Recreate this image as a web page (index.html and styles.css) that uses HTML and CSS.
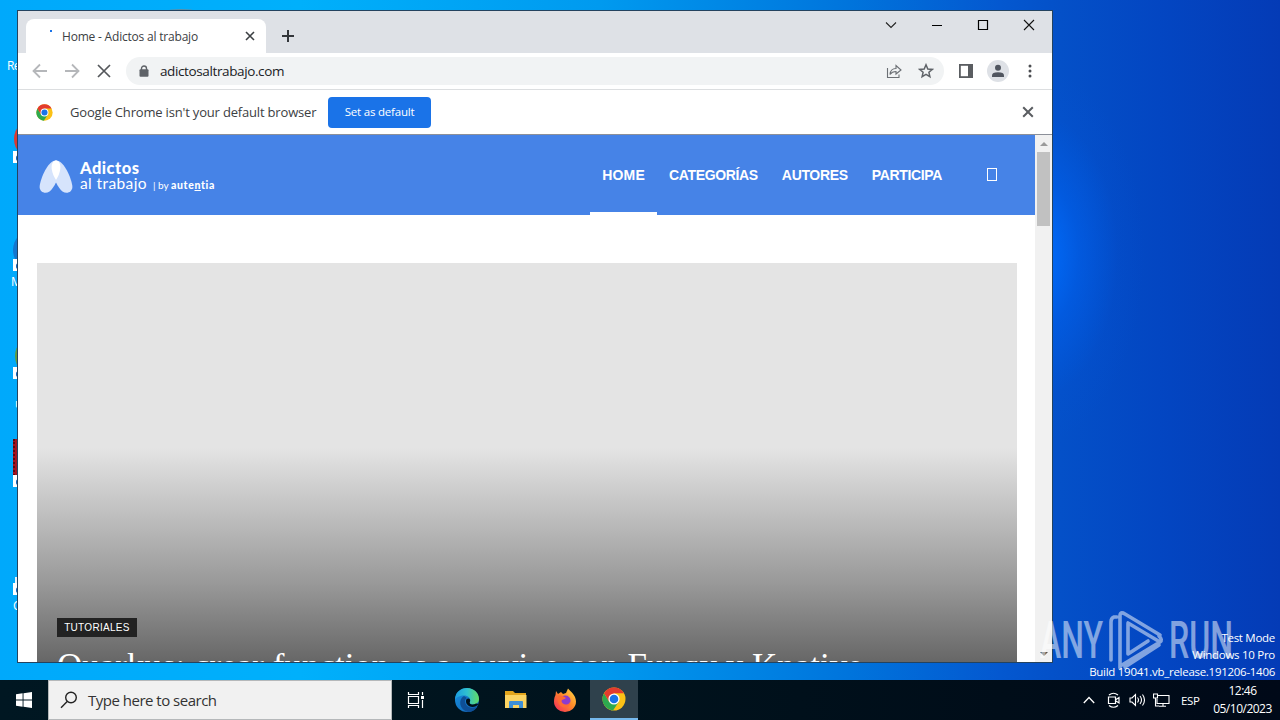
FILE: index.html
```html
<!DOCTYPE html>
<html lang="en">
<head>
    <meta charset="UTF-8">
    <meta name="viewport" content="width=device-width, initial-scale=1.0">
    <title>Home - Adictos al trabajo</title>
    <link rel="stylesheet" href="styles.css">
</head>
<body>

    <!-- Shared symbols -->
    <svg class="defs" width="0" height="0">
        <symbol id="chrome" viewBox="0 0 24 24">
            <circle cx="12" cy="12" r="11.5" fill="#fbc116"/>
            <path d="M2.04 6.25 A11.5 11.5 0 0 0 11 23.5 L16.8 14.8 L12 12 L7.2 14.8Z" fill="#2da94f"/>
            <path d="M2.04 6.25 A11.5 11.5 0 0 1 21.96 6.25 L12 6.25 L7.2 14.8Z" fill="#e33b2e"/>
            <circle cx="12" cy="12" r="5.6" fill="#fff"/>
            <circle cx="12" cy="12" r="4.3" fill="#1a73e8"/>
        </symbol>
        <symbol id="shortcut" viewBox="0 0 12 12">
            <path d="M0 0H12V12H0Z" fill="#fff"/>
            <path d="M3 10V6.500Q3 4 6 4V2L10 5.500L6 8.500V6.500Q4.500 6.500 3 10" fill="#1565c0"/>
        </symbol>
    </svg>

    <div class="desktop">

        <!-- Desktop icons, mostly hidden behind the window -->
        <div class="icon-label label-recycle">Re</div>
        <div class="desk-icon icon-red"></div>
        <svg class="shortcut sc-1"><use href="#shortcut"/></svg>
        <div class="desk-icon icon-edge"></div>
        <svg class="shortcut sc-2"><use href="#shortcut"/></svg>
        <div class="icon-label label-edge">M</div>
        <div class="desk-icon icon-green"></div>
        <svg class="shortcut sc-3"><use href="#shortcut"/></svg>
        <div class="icon-label label-small">u</div>
        <div class="desk-icon icon-zip"></div>
        <svg class="shortcut sc-4"><use href="#shortcut"/></svg>
        <div class="desk-icon icon-white"></div>
        <svg class="shortcut sc-5"><use href="#shortcut"/></svg>
        <div class="icon-label label-c">C</div>
        <div class="desk-icon icon-top"></div>

        <div class="window">
            <div class="tab-strip">
                <div class="tab">
                    <span class="spinner"></span>
                    <span class="tab-title">Home - Adictos al trabajo</span>
                    <svg class="tab-close" width="10" height="10" viewBox="0 0 10 10"><path d="M1 1L9 9M9 1L1 9" stroke="#3c4043" stroke-width="1.6"/></svg>
                </div>
                <svg class="new-tab" width="14" height="14" viewBox="0 0 14 14"><path d="M7 1V13M1 7H13" stroke="#33363a" stroke-width="2"/></svg>
                <div class="window-buttons">
                    <svg width="46" height="28" viewBox="0 0 46 28"><path d="M18 11.500L23 16.500L28 11.500" fill="none" stroke="#222" stroke-width="1.1"/></svg>
                    <svg width="46" height="28" viewBox="0 0 46 28"><path d="M18 14.500H28" stroke="#000"/></svg>
                    <svg width="46" height="28" viewBox="0 0 46 28"><path d="M18.500 9.500H27.500V18.500H18.500Z" fill="none" stroke="#000" stroke-width="1.2"/></svg>
                    <svg width="46" height="28" viewBox="0 0 46 28"><path d="M18 9L28 19M28 9L18 19" stroke="#111" stroke-width="1.1"/></svg>
                </div>
            </div>

            <div class="toolbar">
                <svg width="16" height="16" viewBox="0 0 16 16"><path d="M15 8H2M8 1.500L1.500 8L8 14.500" fill="none" stroke="#b5b7ba" stroke-width="1.8"/></svg>
                <svg width="16" height="16" viewBox="0 0 16 16"><path d="M1 8H14M8 1.500L14.500 8L8 14.500" fill="none" stroke="#b5b7ba" stroke-width="1.8"/></svg>
                <svg width="16" height="16" viewBox="0 0 16 16"><path d="M2 2L14 14M14 2L2 14" stroke="#54575b" stroke-width="1.7"/></svg>
                <div class="address-bar">
                    <svg class="lock" width="10" height="12" viewBox="0 0 10 12"><path d="M2.500 5V3.500A2.500 2.500 0 0 1 7.500 3.500V5" fill="none" stroke="#5f6368" stroke-width="1.4"/><rect x="0.500" y="4.300" width="9" height="7.500" rx="1" fill="#5f6368"/></svg>
                    <span class="url">adictosaltrabajo.com</span>
                    <svg class="share" width="16" height="16" viewBox="0 0 16 16"><path d="M1.500 5V14.500H13V11.500M4 11.500Q4.500 5.500 10 5.500V2.500L15 7L10 11V8.500Q6 8.500 4 11.500Z" fill="none" stroke="#6b6f74" stroke-width="1.1"/></svg>
                    <svg class="star" width="16" height="16" viewBox="0 0 16 16"><path d="M8 1.800L9.800 6L14.300 6.400L10.900 9.300L11.900 13.700L8 11.400L4.100 13.700L5.100 9.300L1.700 6.400L6.200 6Z" fill="none" stroke="#5f6368" stroke-width="1.5"/></svg>
                </div>
                <svg class="side-panel" width="14" height="14" viewBox="0 0 14 14"><rect x="0.900" y="0.900" width="12.200" height="12.200" fill="#fff" stroke="#5a5d61" stroke-width="1.800"/><path d="M9 0H14V14H9Z" fill="#5a5d61"/></svg>
                <svg class="avatar" width="22" height="22" viewBox="0 0 22 22"><circle cx="11" cy="11" r="11" fill="#dee1e6"/><circle cx="11" cy="7.800" r="3" fill="#50555f"/><path d="M5 17V15.500Q5 12.300 11 12.300Q17 12.300 17 15.500V17Z" fill="#50555f"/></svg>
                <svg class="menu" width="4" height="14" viewBox="0 0 4 14"><circle cx="2" cy="2" r="1.500" fill="#4b4d51"/><circle cx="2" cy="7" r="1.500" fill="#4b4d51"/><circle cx="2" cy="12" r="1.500" fill="#4b4d51"/></svg>
            </div>

            <div class="infobar">
                <svg class="infobar-logo" width="17" height="17"><use href="#chrome"/></svg>
                <span class="infobar-text">Google Chrome isn't your default browser</span>
                <button class="default-button">Set as default</button>
                <svg class="infobar-close" width="12" height="12" viewBox="0 0 12 12"><path d="M1.200 1.200L10.800 10.800M10.800 1.200L1.200 10.800" stroke="#5a5d61" stroke-width="2"/></svg>
            </div>

            <div class="viewport">
                <div class="page">
                    <header class="site-header">
                        <svg class="site-mark" width="34" height="34" viewBox="0 0 34 34">
                            <path d="M17 0.500C10 0.500 3 14 0.800 25C-0.500 32 6 34.500 10.500 31.500C15 28 20 18 21.300 9C21.800 4 20 0.500 17 0.500Z" fill="#d6e4fc"/>
                            <path d="M17 0.500C24 0.500 31 14 33.200 25C34.500 32 28 34.500 23.500 31.500C19 28 14 18 12.700 9C12.200 4 14 0.500 17 0.500Z" fill="#d6e4fc"/>
                            <path d="M17 0.500C20 0.500 21.800 4 21.300 9C20.700 13 19 17 17 20C15 17 13.300 13 12.700 9C12.200 4 14 0.500 17 0.500Z" fill="#fff"/>
                        </svg>
                        <div class="site-name">
                            <span class="name-top">Adictos</span>
                            <div class="name-bottom">
                                <span class="name-light">al trabajo</span>
                                <span class="name-by">| by</span>
                                <span class="name-brand">aute<u>n</u>tia</span>
                            </div>
                        </div>
                        <nav class="site-nav">
                            <a class="active" href="#">HOME</a>
                            <a href="#">CATEGORÍAS</a>
                            <a href="#">AUTORES</a>
                            <a href="#">PARTICIPA</a>
                        </nav>
                        <span class="search-glyph"></span>
                    </header>
                    <article class="hero">
                        <span class="hero-tag">TUTORIALES</span>
                        <h2 class="hero-title">Quarkus: crear function as a service con Funqy y Knative</h2>
                    </article>
                </div>
                <div class="scrollbar">
                    <span class="arrow-up"></span>
                    <span class="thumb"></span>
                    <span class="arrow-down"></span>
                </div>
            </div>
        </div>

        <!-- Watermark -->
        <svg class="watermark" width="200" height="64" viewBox="0 0 200 64">
            <text x="2" y="50" textLength="63" lengthAdjust="spacingAndGlyphs">ANY</text>
            <text x="131" y="50" textLength="64" lengthAdjust="spacingAndGlyphs">RUN</text>
            <path d="M79 9L76 9Q73 10 73 14V52M82 60V8Q82 3 87 6L122 27M90 15L122 34Q125 32 121 28M90 16V46L110 33M122 34L84 57M121 37L87 59" fill="none" stroke="#fff" stroke-width="3.6" stroke-linejoin="round" stroke-linecap="round"/>
        </svg>

        <div class="build-info">
            <span>Test Mode</span>
            <span>Windows 10 Pro</span>
            <span>Build 19041.vb_release.191206-1406</span>
        </div>
    </div>

    <div class="taskbar">
        <div class="start">
            <svg width="16" height="16" viewBox="0 0 16 16"><path d="M0 2.200L6.600 1.300V7.500H0ZM7.500 1.200L16 0V7.500H7.500ZM0 8.400H6.600V14.700L0 13.800ZM7.500 8.400H16V16L7.500 14.800Z" fill="#fff"/></svg>
        </div>
        <div class="search">
            <svg width="18" height="18" viewBox="0 0 18 18"><circle cx="11" cy="6.500" r="5.300" fill="none" stroke="#222" stroke-width="1.400"/><path d="M7.200 10.500L1 16.700" stroke="#222" stroke-width="1.400"/></svg>
            <span>Type here to search</span>
        </div>
        <div class="task-item task-view">
            <svg width="18" height="18" viewBox="0 0 18 18"><path d="M1.500 1V3.500H11.500V1M1.500 5.500H11.500V12.500H1.500ZM1.500 17V14.500H11.500V17M15.500 1V4M15.500 9V17" fill="none" stroke="#fff" stroke-width="1.200"/><path d="M14 5H17V8H14Z" fill="#fff"/></svg>
        </div>
        <div class="task-item">
            <svg width="26" height="26" viewBox="0 0 26 26">
                <defs>
                    <linearGradient id="edgeTop" x1="0" x2="1"><stop offset="0" stop-color="#1a9be0"/><stop offset=".5" stop-color="#2fc0d0"/><stop offset="1" stop-color="#62dc62"/></linearGradient>
                    <linearGradient id="edgeLow" x1="0" y1="0" x2="1" y2="1"><stop offset="0" stop-color="#1590df"/><stop offset="1" stop-color="#1562b4"/></linearGradient>
                </defs>
                <circle cx="13" cy="13" r="12" fill="url(#edgeLow)"/>
                <path d="M1 13C1 4 8 1 13 1C20 1 25 6 25 12C25 16 21 18 18 17.500C15.500 17 15 16 16 14.500C17 11 14 8.500 10 8.500C5 8.500 1.500 11 1 13Z" fill="url(#edgeTop)"/>
                <path d="M10 9C4 12 5 23 14 25C18 25 21 23.500 23.500 19.500C18 22.500 11 20 11 14C11 12.500 12 11.500 13 11Z" fill="#0e4f97"/>
                <path d="M16 14.500C17 11.500 14 10.500 12.300 12.500C11 16 14 20 18.500 20C21 20 23 19 24.500 17L22 16.500C19 18.500 14.500 17.500 16 14.500Z" fill="#001019"/>
            </svg>
        </div>
        <div class="task-item">
            <svg width="24" height="24" viewBox="0 0 24 24"><path d="M1 3H9L11 5H22V9H1Z" fill="#e3a51c"/><path d="M1 7H22.500V20H1Z" fill="#fcd462"/><path d="M5 20V14Q5 13 6 13H18Q19 13 19 14V20H15V17H9V20Z" fill="#3e8fd6"/></svg>
        </div>
        <div class="task-item">
            <svg width="24" height="24" viewBox="0 0 24 24">
                <defs><linearGradient id="fox" x1="1" y1="0" x2="0" y2="1"><stop offset="0" stop-color="#ffe14a"/><stop offset=".45" stop-color="#ff8a28"/><stop offset="1" stop-color="#f4225f"/></linearGradient></defs>
                <path d="M3 3L5 6L8 4L10 6L13 5L15 0.500C17 3 23 7 23 13.500A11 10.500 0 0 1 1 13.500C1 10 2 8 2.500 7Z" fill="url(#fox)"/>
                <circle cx="12.500" cy="12.500" r="5" fill="#8d3bcc"/>
                <path d="M5 8C8 7 10 8 13 10C11 12 9 11 8.500 13C9 17 15 18 17 14C18 20 10 21 6.500 17C4.500 14 4.500 10 5 8Z" fill="#ff6a33"/>
            </svg>
        </div>
        <div class="task-item running">
            <svg width="24" height="24"><use href="#chrome"/></svg>
        </div>
        <div class="tray">
            <svg class="chevron" width="12" height="8" viewBox="0 0 12 8"><path d="M0.800 7L6 1.500L11.200 7" fill="none" stroke="#fff" stroke-width="1.300"/></svg>
            <svg class="meet" width="14" height="16" viewBox="0 0 14 16"><path d="M2 3Q6.500 -0.500 11 3M2 13.500Q6.500 17 11 13.500M1.500 5H8.500V11.500H1.500ZM9 7.500L12 5.500V11L9 9" fill="none" stroke="#fff" stroke-width="1.200"/></svg>
            <svg class="volume" width="17" height="14" viewBox="0 0 17 14"><path d="M1 5H3L6.500 1.500V12.500L3 9H1ZM8.500 4.500Q10.500 7 8.500 9.500M11 3Q14 7 11 11M13.500 1.500Q17.500 7 13.500 12.500" fill="none" stroke="#fff" stroke-width="1.100"/></svg>
            <svg class="network" width="17" height="14" viewBox="0 0 17 14"><path d="M5 2.500H16V10.500H4V6M10 10.500V13M6 13.300H13M0.500 1H4.500V5H0.500ZM2.500 5V13H6" fill="none" stroke="#fff" stroke-width="1.100"/></svg>
            <span class="lang">ESP</span>
            <div class="clock"><span>12:46</span><span>05/10/2023</span></div>
        </div>
    </div>

</body>
</html>
```
FILE: styles.css
```css
* {
    box-sizing: border-box;
}

body {
    margin: 0;
    width: 1280px;
    height: 720px;
    overflow: hidden;
    font-family: "Open Sans", "Noto Sans", sans-serif;
    display: flex;
    flex-direction: column;
}

svg {
    display: block;
    flex: none;
}

.defs {
    position: absolute;
}

.desktop {
    position: relative;
    flex: none;
    height: 680px;
    overflow: hidden;
    background:
        radial-gradient(ellipse 110px 190px at 1035px 255px, rgba(0, 110, 255, 1), rgba(0, 100, 245, 0.5) 40%, rgba(0, 90, 230, 0.1) 75%, rgba(0, 90, 230, 0) 100%),
        linear-gradient(90deg, #00a9fb 0, #00b0fb 300px, #009aef 600px, #0074dc 850px, #0458d0 1000px, #0450c8 1060px, #0346c2 1160px, #043bb6 1280px);
}

/* Desktop icons */
.desk-icon {
    position: absolute;
    left: 13px;
    width: 40px;
    height: 40px;
    border-radius: 50%;
}

.icon-top {
    left: 168px;
    top: 9px;
    width: 26px;
    height: 4px;
    background: #5a8fa8;
}

.icon-red { left: 14px; top: 119px; background: #d93a32; }
.icon-edge { top: 230px; background: #1477cf; }
.icon-green { left: 15px; top: 336px; background: #5f9a3d; }
.icon-zip { top: 439px; background: #a3121f; border-radius: 0; border-left: 2px dotted #5a0810; }
.icon-white { left: 15px; top: 577px; height: 10px; width: 10px; background: #e8f4fc; border-radius: 0; }

.shortcut {
    position: absolute;
    left: 13px;
    width: 12px;
    height: 12px;
}

.sc-1 { top: 151px; }
.sc-2 { top: 259px; }
.sc-3 { top: 367px; }
.sc-4 { top: 475px; }
.sc-5 { top: 583px; }

.icon-label {
    position: absolute;
    color: #fff;
    font-size: 12px;
    line-height: 16px;
    white-space: nowrap;
}

.label-recycle { left: 7px; top: 58px; letter-spacing: -0.6px; }
.label-edge { left: 11px; top: 274px; }
.label-small { left: 15px; top: 396px; }
.label-c { left: 13px; top: 598px; }

/* Browser window */
.window {
    position: absolute;
    left: 17px;
    top: 10px;
    width: 1036px;
    height: 653px;
    border: 1px solid #24435f;
    background: #fff;
    display: flex;
    flex-direction: column;
}

.tab-strip {
    flex: none;
    height: 42px;
    background: #dee1e6;
    display: flex;
    padding-left: 8px;
}

.tab {
    width: 240px;
    height: 34px;
    margin-top: 8px;
    background: #fff;
    border-radius: 8px 8px 0 0;
    display: flex;
    align-items: center;
    padding: 0 11px 0 24px;
}

.spinner {
    width: 2px;
    height: 2px;
    margin-top: -10px;
    background: #1a73e8;
}

.tab-title {
    margin-left: 10px;
    font-size: 12px;
    letter-spacing: -0.2px;
    color: #3c4043;
    white-space: nowrap;
}

.tab-close {
    margin-left: auto;
}

.new-tab {
    margin: 18px 0 0 15px;
}

.window-buttons {
    margin-left: auto;
    display: flex;
}

.toolbar {
    flex: none;
    height: 37px;
    border-bottom: 1px solid #dcdee0;
    display: flex;
    align-items: center;
    gap: 16px;
    padding-left: 14px;
}

.address-bar {
    width: 818px;
    height: 28px;
    margin-left: -2px;
    background: #f1f3f4;
    border-radius: 14px;
    display: flex;
    align-items: center;
    padding: 0 10px 0 13px;
}

.url {
    margin-left: 11px;
    font-size: 13.5px;
    letter-spacing: -0.38px;
    color: #202124;
}

.share {
    margin-left: auto;
}

.star {
    margin-left: 16px;
}

.side-panel {
    margin-left: -1px;
}

.avatar {
    margin-left: -2px;
}

.menu {
    margin-left: 3px;
}

.infobar {
    flex: none;
    height: 45px;
    border-bottom: 1px solid #8c9099;
    display: flex;
    align-items: center;
    padding: 0 18px 0 18px;
}

.infobar-text {
    width: 246px;
    margin-left: 17px;
    font-size: 13px;
    letter-spacing: -0.18px;
    color: #3c4043;
    white-space: nowrap;
}

.default-button {
    width: 103px;
    height: 31px;
    margin-left: 12px;
    padding: 0 0 2px;
    border: 0;
    border-radius: 4px;
    background: #1a73e8;
    color: #fff;
    font-family: inherit;
    font-size: 11.5px;
    letter-spacing: -0.2px;
}

.infobar-close {
    margin-left: auto;
}

/* Web page */
.viewport {
    flex: 1;
    min-height: 0;
    display: flex;
    overflow: hidden;
}

.page {
    flex: 1;
    overflow: hidden;
}

.site-header {
    height: 80px;
    margin-bottom: 48px;
    background: #4683e7;
    color: #fff;
    display: flex;
    align-items: center;
    padding-left: 21px;
}

.site-mark {
    margin-top: 4px;
}

.site-name {
    width: 140px;
    margin-left: 7px;
    margin-top: 2px;
    font-family: Lato, sans-serif;
    white-space: nowrap;
}

.name-top {
    display: block;
    font-size: 16.5px;
    font-weight: 900;
    letter-spacing: 0.5px;
    line-height: 16px;
}

.name-bottom {
    display: flex;
    align-items: baseline;
    line-height: 14px;
}

.name-light {
    width: 67px;
    font-size: 15.5px;
    letter-spacing: 0.4px;
}

.name-by {
    width: 16px;
    margin-left: 6px;
    font-size: 10px;
}

.name-brand {
    margin-left: 2px;
    font-size: 10.5px;
    font-weight: 900;
    letter-spacing: 0.65px;
}

.site-nav {
    height: 80px;
    margin-left: auto;
    display: flex;
}

.site-nav a {
    height: 80px;
    padding: 0 12px;
    border-bottom: 3px solid transparent;
    color: #fff;
    font: bold 14px/80px "Liberation Sans", Arial, sans-serif;
    letter-spacing: -0.34px;
    text-decoration: none;
}

.site-nav .active {
    border-bottom-color: #fff;
    letter-spacing: 0.2px;
}

.search-glyph {
    width: 10px;
    height: 13px;
    margin: -1px 38px 0 33px;
    border: 1px solid #fff;
}

.hero {
    width: 980px;
    height: 490px;
    margin-left: 19px;
    padding: 355px 20px 0;
    background: linear-gradient(#e4e4e4 0, #e4e4e4 185px, #999 320px, #666 400px, #555 490px);
    color: #fff;
}

.hero-tag {
    display: block;
    width: 80px;
    height: 19px;
    background: #222;
    font: 10px/19px "Liberation Sans", Arial, sans-serif;
    letter-spacing: 0.3px;
    text-align: center;
}

.hero-title {
    margin: 8px 0 0;
    font: 400 35px/44px "Liberation Serif", "Times New Roman", serif;
    white-space: nowrap;
}

.scrollbar {
    width: 17px;
    background: #f1f1f1;
    display: flex;
    flex-direction: column;
    align-items: center;
}

.arrow-up,
.arrow-down {
    border: 4px solid transparent;
}

.arrow-up {
    margin-top: 3px;
    border-bottom-color: #9a9a9a;
}

.thumb {
    width: 13px;
    height: 74px;
    margin-top: 6px;
    background: #c1c1c1;
}

.arrow-down {
    margin-top: auto;
    margin-bottom: 2px;
    border-top-color: #505050;
}

/* Watermarks */
.build-info {
    position: absolute;
    right: 5px;
    bottom: 0;
    display: flex;
    flex-direction: column;
    align-items: flex-end;
    color: #fff;
    font-size: 11.5px;
    letter-spacing: -0.28px;
    line-height: 17px;
    white-space: nowrap;
}

.watermark {
    position: absolute;
    left: 1038px;
    top: 608px;
    opacity: 0.5;
}

.watermark text {
    fill: #fff;
    font: 500 52px Roboto, sans-serif;
}

/* Taskbar */
.taskbar {
    height: 40px;
    background: linear-gradient(90deg, #001722, #00131d 600px, #000d19 1000px, #000918);
    display: flex;
}

.start {
    width: 48px;
    display: flex;
    align-items: center;
    justify-content: center;
}

.search {
    width: 344px;
    border: 1px solid #b5b8ba;
    background: #f1f1f1;
    color: #333;
    display: flex;
    align-items: center;
    gap: 10px;
    padding-left: 11px;
    font-size: 15px;
    letter-spacing: -0.5px;
}

.task-item {
    width: 48px;
    margin-right: 1px;
    display: flex;
    align-items: center;
    justify-content: center;
}

.task-view {
    margin-right: 3px;
}

.running {
    background: #2f414c;
    border-bottom: 2px solid #76b9ed;
}

.tray {
    margin-left: auto;
    padding-right: 8px;
    color: #fff;
    display: flex;
    align-items: center;
}

.meet {
    margin-left: 12px;
}

.volume {
    margin-left: 8px;
}

.network {
    margin-left: 7px;
}

.lang {
    width: 19px;
    margin-left: 11px;
    font-size: 11.5px;
    letter-spacing: -0.3px;
}

.clock {
    width: 59px;
    margin-left: 13px;
    display: flex;
    flex-direction: column;
    align-items: center;
    font-size: 12px;
    letter-spacing: -0.5px;
    line-height: 18px;
    white-space: nowrap;
}
```
